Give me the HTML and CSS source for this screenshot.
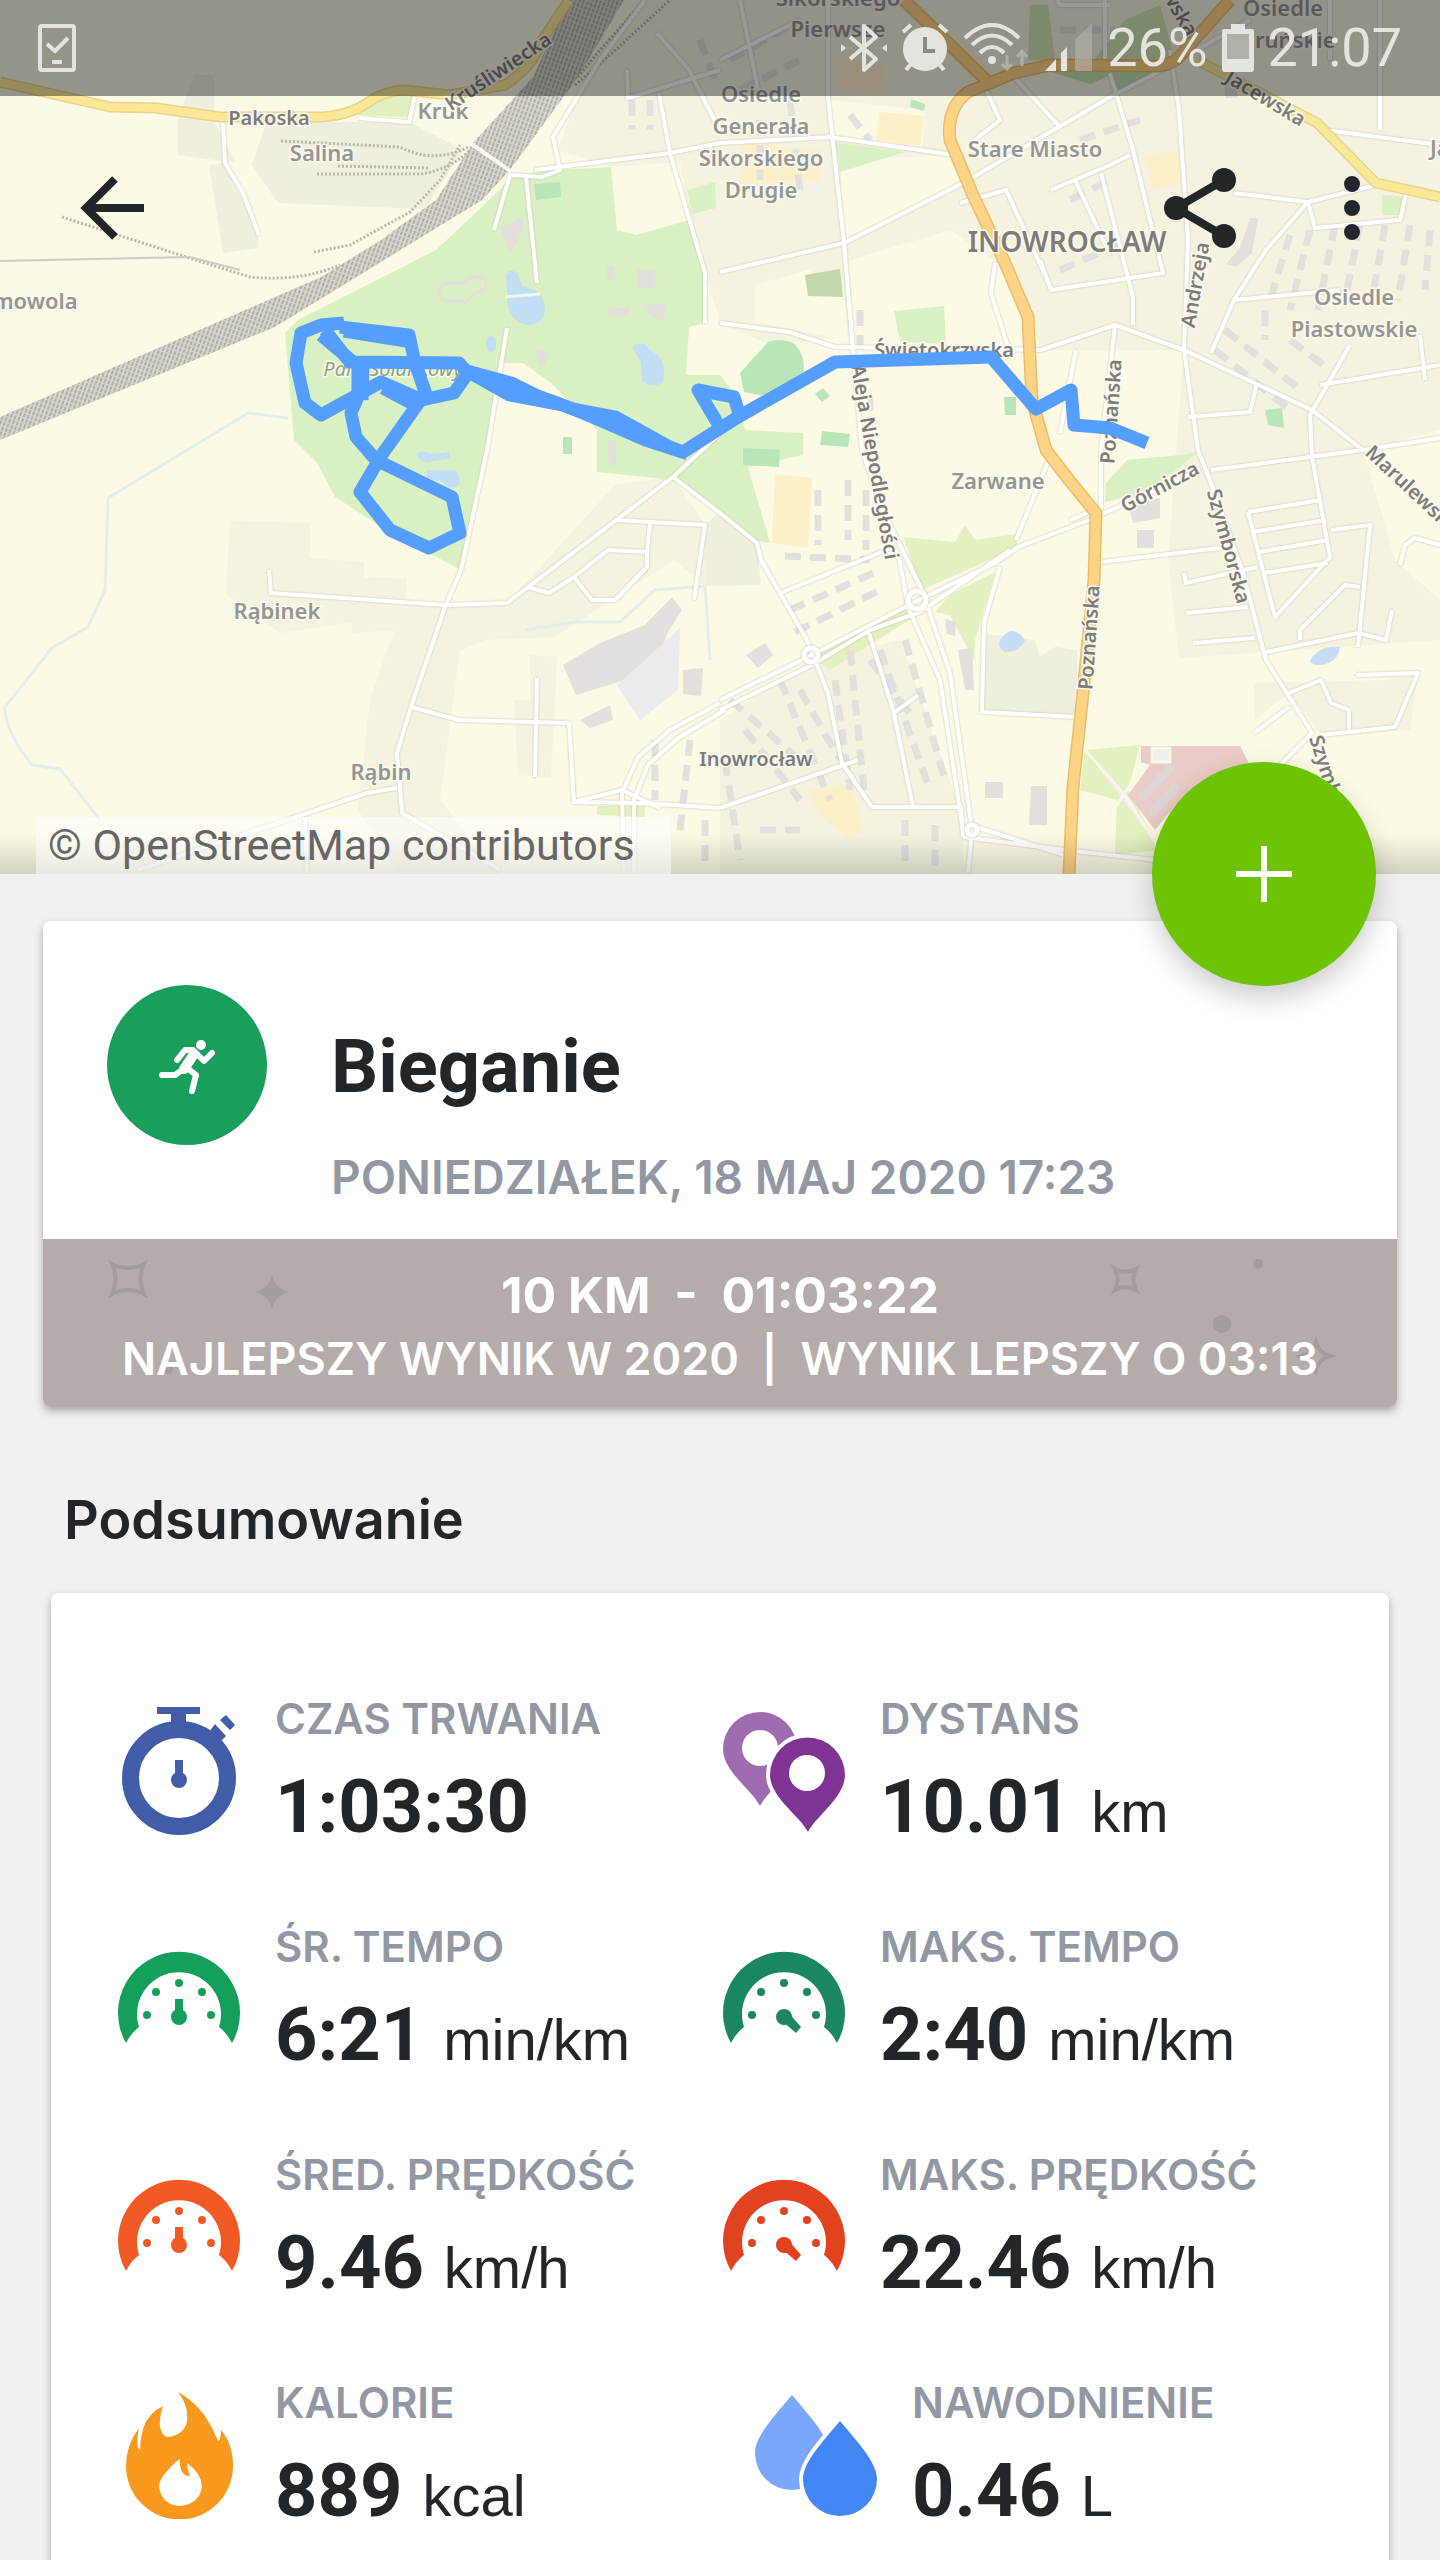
FILE: index.html
```
<!DOCTYPE html>
<html lang="pl">

<head>
    <meta charset="UTF-8">
    <meta name="viewport" content="width=device-width, initial-scale=1">
    <title>Bieganie</title>
    <link rel="stylesheet" href="styles.css">
</head>

<body>

    <header class="map-header">
        <svg class="map" viewBox="0 0 1440 874" preserveAspectRatio="xMidYMid slice" aria-label="Mapa trasy">
            <defs>
                <pattern id="rails" width="4" height="5" patternUnits="userSpaceOnUse" patternTransform="rotate(20)">
                    <rect width="4" height="5" fill="#d9d6cb" />
                    <rect width="2" height="4" fill="#b0aea6" />
                </pattern>
                <linearGradient id="fade" x1="0" y1="0" x2="0" y2="1">
                    <stop offset="0" stop-color="#000" stop-opacity="0" />
                    <stop offset="1" stop-color="#000" stop-opacity="0.16" />
                </linearGradient>
            </defs>

            <!-- land -->
            <rect width="1440" height="874" fill="#fcf9e4" />
            <g fill="#f5f3e0">
                <path d="M590 60 L640 0 H1440 V430 L1363 450 1395 560 1440 600 V640 L1266 652 1179 658 1168 560 1184 350 1041 350 1030 317 770 345 720 323 705 267 690 220 611 167 558 150Z" />
                <path d="M230 521 L310 523 V558 L364 562 V577 L407 579 403 630 352 633 352 622 280 633 226 594Z" />
                <path d="M403 605 L507 603 615 485 673 477 705 525 V586 L674 560 555 637 486 640 460 650 440 800 500 874 H400 L358 810 370 700Z" />
                <path d="M530 655 L557 657 551 778 518 775 514 700 530 700Z" />
                <path d="M1254 683 L1385 680 1418 673 1410 730 1321 735 1289 693 1254 720Z" />
                <path d="M720 720 L812 660 900 640 960 810 965 874 H720Z" />
            </g>
            <g fill="#f0eedd">
                <path d="M267 122 H409 L463 150 425 209 278 203 252 165Z" />
                <path d="M209 165 L225 163 259 235 258 248 223 253Z" />
                <path d="M194 75 H214 V122 L236 163 178 155 178 120Z" />
                <path d="M986 634 L1035 640 1040 657 1055 647 1077 650 V715 L982 712Z" />
                <path d="M705 525 L720 512 757 543 761 585 705 586Z" />
            </g>
            <g fill="#fcf9e4">
                <path d="M840 160 L954 155 963 183 844 243Z" />
                <path d="M611 167 L680 162 689 220 636 235 617 230Z" />
                <path d="M844 262 L950 230 998 263 1030 317 1028 350 853 345Z" />
                <path d="M755 285 L808 270 844 290 848 340 755 322Z" />
                <path d="M830 100 L925 110 922 148 830 137Z" />
            </g>
            <g fill="#d9f1c2">
                <path d="M514 175 L558 170 611 167 617 230 636 235 689 220 705 267 705 323 689 327 686 375 720 375 734 393 745 430 803 433 803 455 748 467 770 543 752 540 674 480 597 472 597 430 551 383 523 363 500 363 487 450 461 570 429 553 386 530 335 497 317 463 294 440 285 333 298 320 436 250 482 207Z" />
                <path d="M835 142 L905 152 840 172Z" />
                <path d="M894 311 L944 306 946 344 900 342Z" />
                <path d="M1127 460 L1180 455 1198 452 1150 492 1105 502 1106 483Z" />
                <path d="M1382 195 L1407 197 1402 215 1382 215Z" />
                <path d="M687 190 L715 182 716 208 692 214Z" />
                <path d="M375 95 L415 96 410 117 358 115Z" fill="#e2f0c0" />
            </g>
            <g fill="#e3f0c0">
                <path d="M903 537 L955 542 965 525 975 540 1016 534 1018 547 922 590Z" />
                <path d="M995 572 L975 640 974 660 950 615 935 612 950 595Z" />
                <path d="M812 655 L913 605 925 610 830 670Z" />
                <path d="M1085 750 L1140 745 1128 790 1160 850 1115 855 1117 800 1080 790Z" />
                <path d="M597 806 H645 V817 L597 815Z" />
            </g>
            <g fill="#b9e6b8">
                <path d="M740 373 L768 342 Q780 337 795 344 Q808 360 802 378 L764 396 744 392Z" />
                <path d="M534 184 L560 182 561 197 536 200Z" />
                <path d="M743 448 L780 450 779 467 743 465Z" />
                <path d="M822 431 L850 434 848 447 820 445Z" />
                <path d="M1004 397 H1016 V415 H1005Z" />
                <path d="M1265 410 L1282 408 1284 428 1268 425Z" />
                <path d="M833 812 L855 818 848 832 830 823Z" />
                <path d="M911 99 L925 104 924 111 910 107Z" />
                <path d="M563 437 H572 V454 H563Z" />
                <path d="M823 388 L830 396 822 402 815 394Z" />
            </g>
            <path d="M805 275 L840 269 843 297 808 296Z" fill="#c2d8ab" />
            <path d="M1030 5 L1048 5 1055 60 1028 60ZM1125 20 L1160 5 1175 60 1090 65Z" fill="#cfe5b5" />
            <path d="M1045 70 L1160 72 1120 92 1108 76 1090 84Z" fill="#c2e0b0" />
            <g fill="#fdf0c8">
                <path d="M775 474 L812 478 808 548 772 543Z" />
                <path d="M880 112 L924 116 920 146 876 140Z" />
                <path d="M740 143 L822 150 820 180 740 184Z" />
                <path d="M1145 155 L1178 152 1180 184 1152 190Z" />
                <path d="M840 55 L885 65 880 95 840 90Z" />
                <path d="M808 790 L850 785 863 830 850 840 818 812Z" />
            </g>
            <path d="M1141 746 L1240 746 1250 765 1180 800 1155 830 1128 795 1150 765 1141 762Z" fill="#e9cbc7" />
            <path d="M1140 800 L1172 765 M1150 815 L1178 785" stroke="#ddd6d4" stroke-width="9" />
            <path d="M1152 748 h18 v14 h-18Z M1085 750 L1125 795 1160 850 M1140 770 L1110 815" fill="#f1eeee" stroke="#f8f8ea" stroke-width="3" />
            <g fill="#c3ddf5">
                <path d="M506 275 Q510 267 518 274 L522 286 Q545 290 545 310 Q544 323 530 325 Q515 325 508 308Z" />
                <path d="M632 347 Q642 338 650 350 Q668 358 663 382 Q652 390 642 380 L641 362Z" />
                <path d="M416 455 Q422 448 432 454 L450 452 V459 L432 461 Q423 466 416 455Z" />
                <path d="M427 470 H456 Q462 480 458 486 Q450 490 442 482 L427 478Z" />
                <path d="M1000 640 Q1012 622 1025 640 Q1020 652 1005 652 Q997 648 1000 640Z" />
                <path d="M1310 660 Q1320 645 1340 647 Q1338 662 1322 665 Q1310 666 1310 660Z" />
                <ellipse cx="491" cy="344" rx="5" ry="8" />
            </g>
            <path d="M505 297 L540 294" stroke="#f4f6e8" stroke-width="3" />
            <path d="M438 290 L445 283 H465 L472 276 484 278 486 288 474 294 466 302 442 300Z" fill="none" stroke="#e3dfdc" stroke-width="3" />
            <g fill="none" stroke="#e3eeea" stroke-width="3">
                <path d="M288 418 L248 413 108 498 105 590 88 627 52 648 5 707 Q4 730 32 765 L60 769 100 820" />
                <path d="M525 630 L575 622 620 622 655 590 705 586 710 660" />
            </g>

            <!-- buildings -->
            <g fill="#e3dfdc">
                <path d="M563 665 L600 643 645 625 672 597 682 610 668 632 655 665 625 680 576 695Z" />
                <path d="M683 670 L703 668 701 696 683 694Z" />
                <path d="M746 655 L765 643 773 655 758 668Z" />
                <path d="M1031 786 H1047 V825 H1029Z M985 782 H1003 V798 H985Z M945 619 L956 622 955 636 947 634Z M958 650 L972 648 974 690 965 690Z" />
                <path d="M636 270 H655 V288 H638Z M607 266 h8 v14 h-8Z M608 309 L630 307 627 317 607 316Z M642 305 L665 304 664 320 652 318Z M500 228 L523 217 522 232 510 254Z" />
                <path d="M1137 530 H1154 V548 H1137Z M1128 503 L1160 498 1160 518 1133 523Z M1225 78 h12 v20 h-12Z M1250 218 l8 0 -6 35 -16 14 -10 -3 14 -16Z" />
                <path d="M580 720 L610 705 613 720 590 728Z M607 440 H616 V465 H610Z M536 350 h10 v15 h-8Z" />
            </g>
            <path d="M617 685 L680 628 678 690 640 720Z" fill="#ebebee" />
            <g fill="none" stroke="#e3dfdc" stroke-width="7" stroke-dasharray="16 9">
                <path d="M790 610 L880 570 M795 632 L880 590 M785 556 L870 560 M818 490 V545 M848 480 V540 M866 490 V550" />
                <path d="M730 700 L800 760 M780 680 L830 800 M745 730 L800 800 M850 650 L865 800 M880 650 L930 790 M905 640 L945 780 M835 680 L850 790 M725 760 L740 860 M760 830 L800 830 M905 820 V870 M935 825 V870" />
                <path d="M655 740 V800 M690 740 L680 830 M705 820 V870 M870 660 L915 720 M800 690 L840 760" />
                <path d="M1290 235 L1270 300 M1310 230 L1290 310 M1335 225 L1318 310 M1360 225 L1345 300 M1385 225 L1372 300 M1410 225 L1398 300 M1430 230 L1425 290" />
                <path d="M1225 330 L1300 390 M1215 350 L1290 410 M1265 310 V340 M1290 340 L1330 370" />
                <path d="M632 100 V130 M650 100 V130 M700 40 L715 80 M730 60 L800 20 M740 90 L800 60 M760 120 L760 180 M790 100 L800 190 M850 115 L870 140" />
                <path d="M1060 30 h60 M1080 140 L1140 120 M1070 200 L1110 180 M1060 270 L1130 240 M860 310 V350 M870 395 V430" />
            </g>

            <!-- railway -->
            <path d="M569 0 L533 77 473 143 436 200 381 240 321 277 0 417 V440 L275 327 381 262 482 200 510 170 578 77 624 0Z" fill="url(#rails)" />
            <g fill="none" stroke="#b9b6ac" stroke-width="3" stroke-dasharray="2 2">
                <path d="M281 141 L400 147 Q435 165 470 146 M317 174 H420 Q450 170 470 150 M338 166 L430 168" />
                <path d="M62 217 L180 255 250 277 Q300 282 340 265 M314 252 L350 245 410 212 440 180 460 145" />
                <path d="M578 77 L600 50 645 0 M575 85 L610 55 670 0" />
            </g>
            <path d="M0 261 L190 257 240 270" fill="none" stroke="#cfccc0" stroke-width="2" />
            <path d="M470 143 L512 172" stroke="#faf8ee" stroke-width="4" />

            <!-- roads -->
            <g class="road">
                <path d="M223 122 L225 163 243 193 259 235" />
                <path d="M415 95 L409 122 358 118" />
                <path d="M494 230 L510 175 542 177 560 170 553 137 600 60 645 0" />
                <path d="M535 170 L670 153 720 143 830 137 954 155" />
                <path d="M627 70 L628 98 720 70 M657 33 L689 70 716 123 M659 93 L670 153 705 273 705 323" />
                <path d="M526 177 L537 283 M507 328 L487 450 461 570 445 607 411 707 397 753 402 813 500 870" />
                <path d="M269 570 L271 593 445 605 507 603 673 477 738 417 835 362 991 357" />
                <path d="M673 477 L720 513 757 543 761 560 807 640 828 693 842 763 872 807 961 807 963 837" />
                <path d="M411 707 L459 720 569 723 574 802 643 803 720 808" />
                <path d="M397 788 L367 793 138 870 M305 817 L307 873 M537 678 L535 777" />
                <path d="M720 703 L670 730 638 757 622 793 624 873 M725 710 L678 738 648 765 634 800 634 873" />
                <path d="M574 802 L622 790 660 808" />
                <path d="M720 700 L812 655 913 603 995 563 1018 547 1097 517 M720 710 L812 665 870 630 920 612 1010 550" />
                <path d="M615 520 L705 525 694 600 M574 577 L608 550 647 552 647 567 615 600 592 600 574 577 549 593 528 587 M650 523 L647 552" />
                <path d="M828 0 V97 L844 243 853 350 862 450 881 507 922 590 950 673 972 830 968 873" />
                <path d="M899 557 L908 607 940 680 963 830" />
                <path d="M720 272 L844 243 963 183 1110 97 1156 73 1250 20" />
                <path d="M720 323 L789 332 835 347 1041 350 1115 325 1184 350 1312 410 1363 450" />
                <path d="M1170 50 L1179 110 1188 240 1184 350 1198 450 1211 483 1243 573 1266 660 1312 733 1280 765" />
                <path d="M1110 73 L1133 150 1163 273 1051 290 1040 260 M1014 77 L1060 127 M986 90 L1000 120 975 140 M1101 173 L1133 297 V325 M1051 190 L1110 165 1130 155 M960 203 L1006 190 1045 275 M1075 180 L1110 255" />
                <path d="M1234 193 L1308 202 1376 185 M1308 202 L1266 250 1234 300 1211 353 M1308 202 L1315 228 1400 220 1407 190 M1234 300 L1340 290" />
                <path d="M995 263 L991 293 1009 350 M1076 350 L1060 433 M1115 325 L1101 450 V507 L1070 520" />
                <path d="M1211 470 L1363 450 1440 438 M1248 512 L1321 500 M1248 512 L1275 617 1330 557 1312 457 1310 415 1350 345 M1252 532 L1326 520 M1259 552 L1328 540 M1264 573 L1328 563 M1100 515 L1200 470" />
                <path d="M1101 562 L1220 548 M1184 573 L1186 583 1257 567 M1186 613 L1248 607 M1193 643 L1255 638 M1266 652 L1358 633 1386 640 1392 610 M1331 530 L1370 525 1358 647 M1300 640 V630 L1345 585 1360 587" />
                <path d="M1289 693 L1321 680 1331 703 1349 710 1349 733 M1321 735 L1395 727 1418 673 1356 675 M1254 733 L1289 707" />
                <path d="M1000 567 L984 623 982 712 1076 717 M1016 540 L1050 457" />
                <path d="M963 837 L1064 850 1156 860 M970 825 L1064 855 M869 633 L894 713 913 807 M720 808 L858 760 M780 593 L894 547 M894 713 L918 695 M1400 565 L1405 545 1415 538 1440 545" />
                <path d="M1325 130 L1440 145 M1330 0 V60 M1380 0 V130 M720 60 L800 20 M740 0 L760 100 M1057 0 L1060 5 1110 5 M1105 0 V60" />
                <path d="M1320 385 L1440 365 M1188 417 L1250 412 1257 383 M1420 335 L1425 380" />
            </g>
            <g class="road road-main">
                <circle cx="917" cy="600" r="9" />
                <circle cx="811" cy="655" r="7" />
                <circle cx="972" cy="830" r="5" />
            </g>

            <path class="yellow-edge" d="M0 82 L110 107 156 108 220 117 321 117 Q350 115 367 103 T404 90 L450 95 505 85 Q535 65 542 40 L569 0 M1197 60 L1317 123 1376 183 1440 197" />
            <path class="yellow" d="M0 82 L110 107 156 108 220 117 321 117 Q350 115 367 103 T404 90 L450 95 505 85 Q535 65 542 40 L569 0 M1197 60 L1317 123 1376 183 1440 197" />
            <path class="orange-edge" d="M904 0 L986 80 M1230 0 L1179 57 Q1170 66 1156 66 L1050 65 1014 73 968 92 Q946 108 950 140 L972 193 1005 263 1028 317 1032 400 1046 450 1069 480 1096 513 1094 580 1083 693 1073 787 1069 874" />
            <path class="orange" d="M904 0 L986 80 M1230 0 L1179 57 Q1170 66 1156 66 L1050 65 1014 73 968 92 Q946 108 950 140 L972 193 1005 263 1028 317 1032 400 1046 450 1069 480 1096 513 1094 580 1083 693 1073 787 1069 874" />

            <!-- place names -->
            <g class="place">
                <text x="322" y="161">Salina</text>
                <text x="443" y="119">Kruk</text>
                <text x="35" y="309">mowola</text>
                <text x="277" y="619">Rąbinek</text>
                <text x="381" y="780">Rąbin</text>
                <text x="838" y="6">Sikorskiego</text>
                <text x="838" y="37">Pierwsze</text>
                <text x="761" y="102">Osiedle</text>
                <text x="761" y="134">Generała</text>
                <text x="761" y="166">Sikorskiego</text>
                <text x="761" y="198">Drugie</text>
                <text x="1035" y="157">Stare Miasto</text>
                <text x="1283" y="16">Osiedle</text>
                <text x="1283" y="48">Toruńskie</text>
                <text x="1354" y="305">Osiedle</text>
                <text x="1354" y="337">Piastowskie</text>
                <text x="998" y="489">Zarwane</text>
                <text class="start" x="1430" y="156">Ja</text>
                <text class="park" x="393" y="376">Park Solankowy</text>
                <text class="city" x="1067" y="252">INOWROCŁAW</text>
            </g>
            <g class="street">
                <text x="269" y="125">Pakoska</text>
                <text x="756" y="766">Inowrocław</text>
                <text x="944" y="357">Świętokrzyska</text>
                <text transform="translate(502 77) rotate(-34)">Kruśliwiecka</text>
                <text transform="translate(1262 104) rotate(31)">Jacewska</text>
                <text transform="translate(1174 16) rotate(60)">wska</text>
                <text transform="translate(1202 286) rotate(-80)">Andrzeja</text>
                <text transform="translate(1118 412) rotate(-86)">Poznańska</text>
                <text transform="translate(1096 638) rotate(-86)">Poznańska</text>
                <text transform="translate(868 463) rotate(80)">Aleja Niepodległości</text>
                <text transform="translate(1163 493) rotate(-28)">Górnicza</text>
                <text transform="translate(1222 548) rotate(75)">Szymborska</text>
                <text class="start" transform="translate(1364 454) rotate(43)">Marulewska</text>
                <text class="start" transform="translate(1309 738) rotate(72)">Szymborska</text>
            </g>

            <!-- recorded route -->
            <g class="route">
                <path d="M344 323 L321 325 301 333 296 363 305 403 321 415 381 382 422 400 454 393 468 373 459 363 353 362 321 335" />
                <path d="M340 327 L409 335 415 363 427 397 M358 363 V397 L351 413 356 437 376 460 452 497 460 533 429 548 390 530 360 492 381 456 422 398" />
                <path d="M344 331 L406 341 M325 330 L352 365 M363 365 L362 400 M383 388 L415 405" />
                <path d="M468 372 L560 404 683 452 738 417 835 362 991 357 1036 409 1071 390 1074 425 1110 428 1147 443" />
                <path d="M718 424 L698 390 734 397 740 417" />
            </g>
            <path d="M466 364 L514 377 560 400 618 411 683 447 686 460 643 446 565 412 507 401 466 378Z" fill="#549eff" />

            <rect y="834" width="1440" height="40" fill="url(#fade)" />
        </svg>

        <div class="status-bar">
            <svg class="status-phone" viewBox="0 0 38 48" aria-hidden="true">
                <rect x="2" y="2" width="34" height="44" rx="2" fill="none" stroke="currentColor" stroke-width="4" />
                <path d="M9 20 L17 27 30 14" fill="none" stroke="currentColor" stroke-width="4" />
                <rect x="14" y="36" width="10" height="4" rx="1" fill="currentColor" />
            </svg>
            <div class="status-icons">
                <svg width="46" height="50" viewBox="0 0 46 50" aria-hidden="true">
                    <path d="M9 14 L35 36 23 47 V3 L35 14 9 36" fill="none" stroke="currentColor" stroke-width="4" stroke-linejoin="round" />
                    <path d="M0 21 l5 4 -5 4Z M46 21 l-5 4 5 4Z" fill="currentColor" />
                </svg>
                <svg width="48" height="50" viewBox="0 0 48 50" aria-hidden="true">
                    <path d="M2 9 L10 2 M46 9 L38 2 M10 41 L5 47 M38 41 L43 47" stroke="currentColor" stroke-width="4" />
                    <circle cx="24" cy="26" r="22" fill="currentColor" />
                    <path d="M24 14 V28 H34" fill="none" stroke="#8d8b7e" stroke-width="4" />
                </svg>
                <svg width="66" height="50" viewBox="0 0 66 50" aria-hidden="true">
                    <g fill="none" stroke="currentColor" stroke-width="4">
                        <path d="M2 15 Q29 -11 56 15" />
                        <path d="M9 22 Q29 3 49 22" />
                        <path d="M17 30 Q29 18 41 30" />
                    </g>
                    <circle cx="29" cy="37" r="4" fill="currentColor" />
                    <path d="M44 32 V45 M39 41 L44 46 49 41 M59 43 V29 M54 34 L59 28 64 34" fill="none" stroke="#b0afa5" stroke-width="3" />
                </svg>
                <svg width="50" height="50" viewBox="0 0 50 50" aria-hidden="true">
                    <path d="M2 48 L13 36 V48Z M18 30 L24 24 V48 H18Z" fill="currentColor" />
                    <path d="M32 16 L49 1 V48 H32Z" fill="#b0afa5" opacity="0.7" />
                </svg>
                <span class="battery-level">26%</span>
                <svg width="32" height="50" viewBox="0 0 32 50" aria-hidden="true">
                    <path d="M9 1 H23 V6 H30 Q32 6 32 8 V46 Q32 49 29 49 H3 Q0 49 0 46 V8 Q0 6 2 6 H9Z" fill="currentColor" />
                    <path d="M5 11 H27 V36 H5Z" fill="#b0afa8" />
                </svg>
                <span class="clock">21:07</span>
            </div>
        </div>

        <nav class="toolbar">
            <button class="icon-button" aria-label="Wstecz">
                <svg width="64" height="64" viewBox="0 0 64 64">
                    <path d="M64 32 H6 M35 3 L6 32 35 61" fill="none" stroke="currentColor" stroke-width="8" />
                </svg>
            </button>
            <div class="toolbar-actions">
                <button class="icon-button" aria-label="Udostępnij">
                    <svg width="72" height="80" viewBox="0 0 72 80">
                        <path d="M60 12 L12 40 60 68" fill="none" stroke="currentColor" stroke-width="8" />
                        <g fill="currentColor">
                            <circle cx="60" cy="12" r="12" />
                            <circle cx="12" cy="40" r="12" />
                            <circle cx="60" cy="68" r="12" />
                        </g>
                    </svg>
                </button>
                <button class="icon-button" aria-label="Więcej">
                    <svg width="16" height="64" viewBox="0 0 16 64" fill="currentColor">
                        <circle cx="8" cy="8" r="8" />
                        <circle cx="8" cy="32" r="8" />
                        <circle cx="8" cy="56" r="8" />
                    </svg>
                </button>
            </div>
        </nav>

        <a class="attribution" href="#">© OpenStreetMap contributors</a>

        <button class="fab" aria-label="Dodaj">
            <svg width="56" height="56" viewBox="0 0 56 56">
                <path d="M28 0 V56 M0 28 H56" stroke="#fff" stroke-width="6" />
            </svg>
        </button>
    </header>

    <main>
        <section class="card workout">
            <div class="workout-head">
                <svg class="sport" width="160" height="160" viewBox="0 0 160 160" aria-hidden="true">
                    <circle cx="80" cy="80" r="80" fill="#1a9e5c" />
                    <circle cx="94" cy="60" r="5" fill="#fff" />
                    <g fill="none" stroke="#fff" stroke-width="6" stroke-linecap="round" stroke-linejoin="round">
                        <path d="M78 83 L68 90 H55" />
                        <path d="M79 82 L89 90 85 106" />
                        <path d="M89 68 L97 76 105 68" />
                        <path d="M86 65 H78 L70 75" />
                        <path d="M87 69 L77 84" stroke-width="10" />
                    </g>
                </svg>
                <div>
                    <h1>Bieganie</h1>
                    <p class="date">PONIEDZIAŁEK, 18 MAJ 2020 17:23</p>
                </div>
            </div>
            <div class="record">
                <svg class="record-stars" viewBox="0 0 1354 168" preserveAspectRatio="xMidYMid slice" aria-hidden="true">
                    <g fill="none" stroke="#a39c9c" stroke-width="4">
                        <path d="M69 25 Q85 33 101 25 Q94 40 101 55 Q85 47 69 55 Q76 40 69 25Z" />
                        <path d="M1072 30 Q1082 36 1093 30 Q1088 40 1093 51 Q1082 45 1072 51 Q1077 40 1072 30Z" />
                        <path d="M1273 103 Q1276 114 1287 117 Q1276 120 1273 131 Q1270 120 1259 117 Q1270 114 1273 103Z" />
                    </g>
                    <g fill="#a39c9c">
                        <path d="M229 36 Q232 50 246 53 Q232 56 229 70 Q226 56 212 53 Q226 50 229 36Z" />
                        <circle cx="125" cy="130" r="5" />
                        <circle cx="1215" cy="25" r="5" />
                        <circle cx="1179" cy="85" r="9" />
                    </g>
                </svg>
                <p class="record-result">10 KM&nbsp; -&nbsp; 01:03:22</p>
                <p class="record-note">NAJLEPSZY WYNIK W 2020&nbsp; |&nbsp; WYNIK LEPSZY O 03:13</p>
            </div>
        </section>

        <h2>Podsumowanie</h2>

        <section class="card summary">
            <div class="stat">
                <svg class="stat-icon" viewBox="0 0 128 128" fill="#425da8" aria-hidden="true">
                    <circle cx="64" cy="71" r="48.5" fill="none" stroke="#425da8" stroke-width="17" />
                    <path d="M42 0 H85 V7 H71 V20 H56 V7 H42Z M94 25 L100 17 111 29 104 36Z M111 8 L120 18 115 23 105 13Z M60 53 H68 V70 H60Z" />
                    <circle cx="64" cy="73" r="8" />
                </svg>
                <div>
                    <p class="stat-label">CZAS TRWANIA</p>
                    <p class="stat-value">1:03:30</p>
                </div>
            </div>
            <div class="stat">
                <svg class="stat-icon" viewBox="0 0 128 128" aria-hidden="true">
                    <path d="M40 99 C32 83 3 64 3 42 A37 37 0 0 1 77 42 C77 64 48 83 40 99Z" fill="#9f6bb0" />
                    <circle cx="40" cy="41" r="18" fill="#fff" />
                    <path d="M88 125 C80 109 50 90 50 68 A37 37 0 0 1 125 68 C125 90 96 109 88 125Z" fill="#7f3495" stroke="#fff" stroke-width="8" paint-order="stroke" />
                    <circle cx="87" cy="66" r="18" fill="#fff" />
                </svg>
                <div>
                    <p class="stat-label">DYSTANS</p>
                    <p class="stat-value">10.01 <span class="unit">km</span></p>
                </div>
            </div>
            <div class="stat">
                <svg class="stat-icon" viewBox="0 0 128 128" fill="#149f5a" aria-hidden="true">
                    <path d="M11 108 A61 61 0 1 1 117 108 Q112 98 104 92 A42 42 0 1 0 24 92 Q16 98 11 108Z M60 64 H68 V80 H60Z" />
                    <circle cx="32" cy="80" r="4" />
                    <circle cx="41" cy="57" r="4" />
                    <circle cx="64" cy="48" r="4" />
                    <circle cx="87" cy="57" r="4" />
                    <circle cx="96" cy="80" r="4" />
                    <circle cx="64" cy="82" r="8" />
                </svg>
                <div>
                    <p class="stat-label">ŚR. TEMPO</p>
                    <p class="stat-value">6:21 <span class="unit">min/km</span></p>
                </div>
            </div>
            <div class="stat">
                <svg class="stat-icon" viewBox="0 0 128 128" fill="#1b8760" aria-hidden="true">
                    <path d="M11 108 A61 61 0 1 1 117 108 Q112 98 104 92 A42 42 0 1 0 24 92 Q16 98 11 108Z M68 77 L81 92 76 98 62 86Z" />
                    <circle cx="32" cy="80" r="4" />
                    <circle cx="41" cy="57" r="4" />
                    <circle cx="64" cy="48" r="4" />
                    <circle cx="87" cy="57" r="4" />
                    <circle cx="96" cy="80" r="4" />
                    <circle cx="64" cy="82" r="8" />
                </svg>
                <div>
                    <p class="stat-label">MAKS. TEMPO</p>
                    <p class="stat-value">2:40 <span class="unit">min/km</span></p>
                </div>
            </div>
            <div class="stat">
                <svg class="stat-icon" viewBox="0 0 128 128" fill="#f15a24" aria-hidden="true">
                    <path d="M11 108 A61 61 0 1 1 117 108 Q112 98 104 92 A42 42 0 1 0 24 92 Q16 98 11 108Z M60 64 H68 V80 H60Z" />
                    <circle cx="32" cy="80" r="4" />
                    <circle cx="41" cy="57" r="4" />
                    <circle cx="64" cy="48" r="4" />
                    <circle cx="87" cy="57" r="4" />
                    <circle cx="96" cy="80" r="4" />
                    <circle cx="64" cy="82" r="8" />
                </svg>
                <div>
                    <p class="stat-label">ŚRED. PRĘDKOŚĆ</p>
                    <p class="stat-value">9.46 <span class="unit">km/h</span></p>
                </div>
            </div>
            <div class="stat">
                <svg class="stat-icon" viewBox="0 0 128 128" fill="#e2421e" aria-hidden="true">
                    <path d="M11 108 A61 61 0 1 1 117 108 Q112 98 104 92 A42 42 0 1 0 24 92 Q16 98 11 108Z M68 77 L81 92 76 98 62 86Z" />
                    <circle cx="32" cy="80" r="4" />
                    <circle cx="41" cy="57" r="4" />
                    <circle cx="64" cy="48" r="4" />
                    <circle cx="87" cy="57" r="4" />
                    <circle cx="96" cy="80" r="4" />
                    <circle cx="64" cy="82" r="8" />
                </svg>
                <div>
                    <p class="stat-label">MAKS. PRĘDKOŚĆ</p>
                    <p class="stat-value">22.46 <span class="unit">km/h</span></p>
                </div>
            </div>
            <div class="stat">
                <svg class="stat-icon" viewBox="0 0 128 128" aria-hidden="true">
                    <path d="M63 1 Q79 10 90 25 Q98 37 103 50 Q106 49 106 39 Q118 53 118 75 A53.5 53.5 0 0 1 11 75 Q11 54 24 37 Q20 56 25 59 Q25 49 28 38 Q33 22 48 15 Q44 26 45 36 Q47 46 54 46 Q70 43 72 30 Q74 15 63 1Z" fill="#f8991d" />
                    <path d="M65 68 Q60 71 54 78 Q44 88 44 96 Q47 114 65 115 Q85 113 87 95 Q86 82 72 72 Q72 78 75 85 Q64 85 65 68Z" fill="#fff" />
                </svg>
                <div>
                    <p class="stat-label">KALORIE</p>
                    <p class="stat-value">889 <span class="unit">kcal</span></p>
                </div>
            </div>
            <div class="stat stat-indent">
                <svg class="stat-icon" viewBox="0 0 128 128" aria-hidden="true">
                    <path d="M40 4 C53 20 77 44 77 62 A37 37 0 0 1 3 62 C3 44 27 20 40 4Z" fill="#79a7fb" />
                    <path d="M88 30 C101 46 125 70 125 88 A37 37 0 0 1 51 88 C51 70 75 46 88 30Z" fill="#4287f5" stroke="#fff" stroke-width="8" paint-order="stroke" />
                </svg>
                <div>
                    <p class="stat-label">NAWODNIENIE</p>
                    <p class="stat-value">0.46 <span class="unit">L</span></p>
                </div>
            </div>
        </section>
    </main>

</body>

</html>
```

FILE: styles.css
```
* {
    box-sizing: border-box;
}

body {
    margin: 0;
    background-color: #f1f1f1;
    color: #222628;
    font-family: Inter, Roboto, sans-serif;
}

h1,
h2,
p {
    margin: 0;
}

svg {
    display: block;
}

button {
    padding: 0;
    border: none;
    background: none;
    color: inherit;
    cursor: pointer;
}

/* map */
.map-header {
    position: relative;
    display: flex;
    flex-direction: column;
    height: 874px;
}

.map {
    position: absolute;
    inset: 0;
    width: 100%;
    height: 100%;
}

.road {
    fill: none;
    stroke: #fff;
    stroke-width: 4;
    stroke-linejoin: round;
    filter: drop-shadow(0 0 1px #c4c0b2);
}

.road-main {
    stroke-width: 5;
}

.yellow,
.yellow-edge,
.orange,
.orange-edge {
    fill: none;
    stroke-linejoin: round;
}

.yellow-edge {
    stroke: #e6d488;
    stroke-width: 11;
}

.yellow {
    stroke: #fbe897;
    stroke-width: 8;
}

.orange-edge {
    stroke: #e9bd68;
    stroke-width: 13;
}

.orange {
    stroke: #fdd385;
    stroke-width: 10;
}

.place,
.street {
    font-family: "Noto Sans", "Open Sans", sans-serif;
    font-weight: 600;
    text-anchor: middle;
    paint-order: stroke;
    stroke: #fbf9ec;
    stroke-width: 3px;
}

.place {
    fill: #959593;
    font-size: 22px;
}

.street {
    fill: #7c7c7b;
    font-size: 20px;
}

.start {
    text-anchor: start;
}

.park {
    fill: #8ba382;
    font-style: italic;
    font-size: 20px;
    font-weight: 400;
}

.city {
    fill: #7c7c7b;
    font-size: 28px;
}

.route {
    fill: none;
    stroke: #549eff;
    stroke-width: 13;
    stroke-linejoin: round;
}

.status-bar {
    position: relative;
    display: flex;
    justify-content: space-between;
    align-items: center;
    height: 96px;
    padding: 0 38px;
    background-color: rgba(0, 0, 0, 0.4);
    color: #e4e4df;
    font-family: Roboto, sans-serif;
    font-size: 54px;
    line-height: 64px;
}

.status-phone {
    width: 38px;
    height: 48px;
}

.status-icons {
    display: flex;
    align-items: center;
    gap: 14px;
}

.toolbar {
    position: relative;
    display: flex;
    justify-content: space-between;
    align-items: center;
    height: 224px;
    padding: 0 80px;
}

.toolbar-actions {
    display: flex;
    align-items: center;
    gap: 108px;
}

.attribution {
    position: relative;
    align-self: flex-start;
    margin-top: auto;
    margin-left: 36px;
    padding: 0 36px 0 12px;
    background-color: rgba(255, 255, 255, 0.5);
    color: #666;
    font-family: Roboto, sans-serif;
    font-size: 43px;
    line-height: 57px;
    text-decoration: none;
}

.fab {
    position: absolute;
    right: 64px;
    bottom: -112px;
    z-index: 1;
    display: flex;
    justify-content: center;
    align-items: center;
    width: 224px;
    height: 224px;
    border-radius: 50%;
    background-color: #6cc404;
    box-shadow: 0 12px 28px rgba(0, 0, 0, 0.2);
}

/* cards */
.card {
    border-radius: 8px;
    background-color: #fff;
    box-shadow: 0 4px 8px rgba(0, 0, 0, 0.3);
}

.workout {
    margin: 47px 43px 0;
    overflow: hidden;
}

.workout-head {
    display: flex;
    gap: 64px;
    height: 318px;
    padding: 64px 64px 0;
}

.sport {
    flex-shrink: 0;
}

h1 {
    padding-top: 34px;
    font-family: Roboto, sans-serif;
    font-size: 74px;
    font-weight: 700;
    line-height: 96px;
}

.date {
    margin-top: 32px;
    color: #9297a4;
    font-size: 46px;
    font-weight: 600;
    line-height: 60px;
}

.record {
    position: relative;
    padding: 24px 0 16px;
    background-color: #b4abab;
    color: #fff;
    text-align: center;
    line-height: 64px;
}

.record-stars {
    position: absolute;
    inset: 0;
    width: 100%;
    height: 100%;
}

.record-result,
.record-note {
    position: relative;
}

.record-result {
    font-size: 50px;
    font-weight: 700;
}

.record-note {
    font-size: 45px;
    font-weight: 600;
}

h2 {
    margin: 80px 64px 40px;
    font-size: 54px;
    font-weight: 600;
    line-height: 66px;
}

.summary {
    display: grid;
    grid-template-columns: 1fr 1fr;
    row-gap: 76px;
    margin: 0 51px;
    padding: 102px 64px 40px;
}

.stat {
    display: flex;
    align-items: center;
    gap: 32px;
}

.stat-indent {
    padding-left: 32px;
}

.stat-icon {
    flex-shrink: 0;
    width: 128px;
    height: 128px;
}

.stat-label {
    color: #9297a4;
    font-size: 42px;
    font-weight: 600;
    line-height: 48px;
}

.stat-value {
    display: flex;
    align-items: baseline;
    gap: 20px;
    margin-top: 24px;
    font-family: Roboto, sans-serif;
    font-size: 74px;
    font-weight: 700;
    line-height: 80px;
}

.unit {
    font-family: "Liberation Sans", sans-serif;
    font-size: 58px;
    font-weight: 400;
    line-height: 64px;
}
```
